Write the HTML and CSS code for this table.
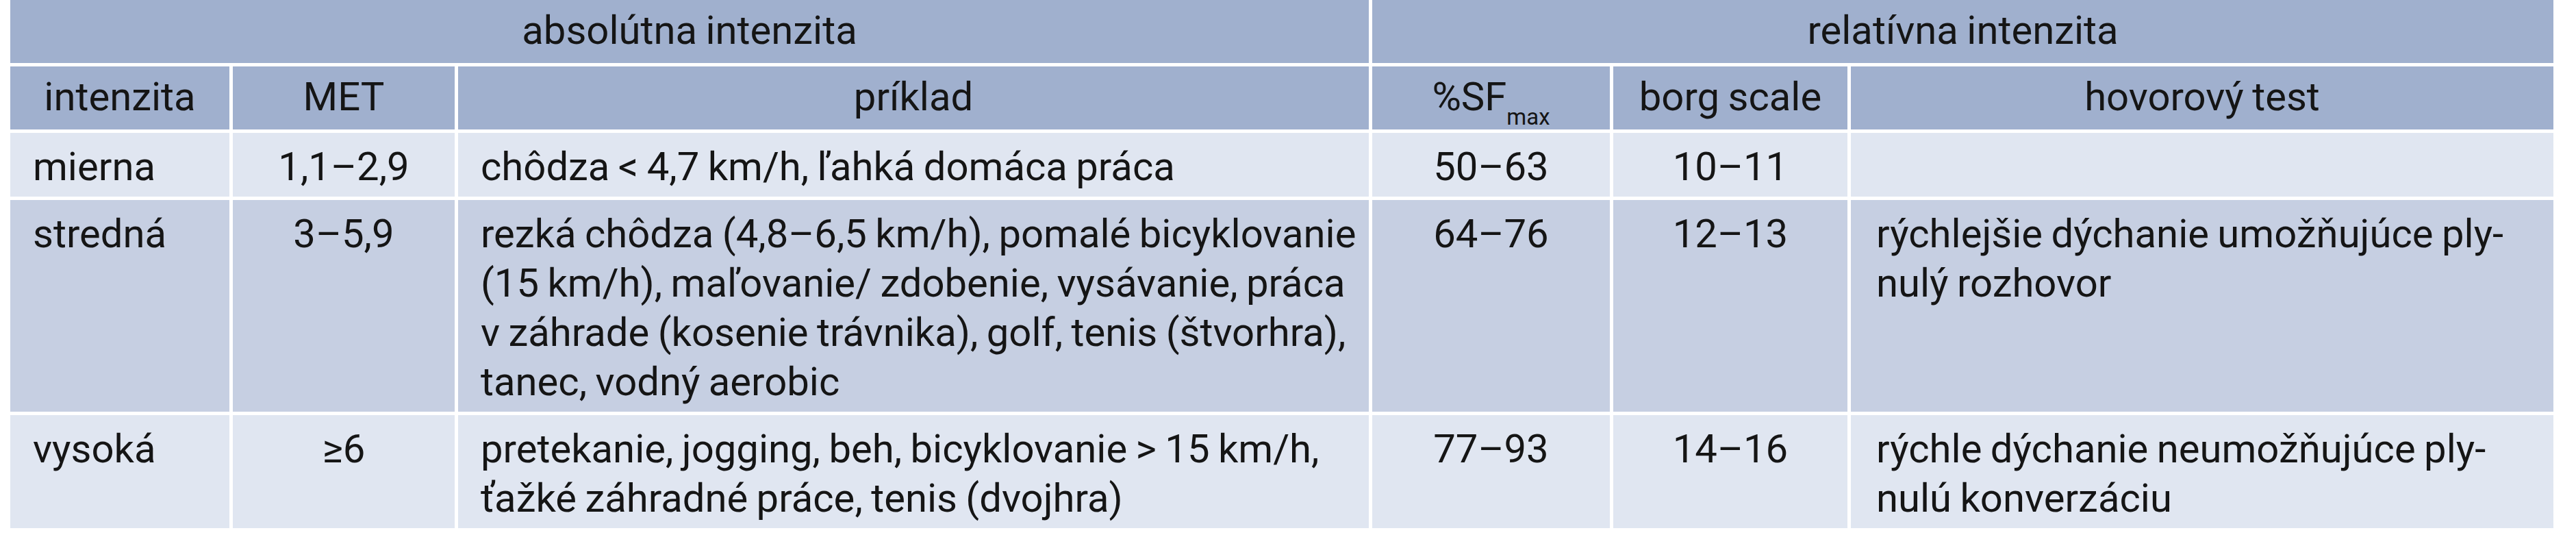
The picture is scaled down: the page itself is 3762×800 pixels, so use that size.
FILE: index.html
```html
<!DOCTYPE html>
<html lang="sk">
<head>
<meta charset="utf-8">
<title>Intenzita pohybovej aktivity</title>
<link rel="stylesheet" href="styles.css">
</head>
<body>
<table class="tab">
  <colgroup>
    <col class="c-int">
    <col class="c-met">
    <col class="c-pri">
    <col class="c-sf">
    <col class="c-borg">
    <col class="c-test">
  </colgroup>
  <thead>
    <tr class="hd">
      <th colspan="3">absolútna intenzita</th>
      <th colspan="3">relatívna intenzita</th>
    </tr>
    <tr class="hd">
      <th>intenzita</th>
      <th>MET</th>
      <th>príklad</th>
      <th>%SF<span class="sub">max</span></th>
      <th>borg scale</th>
      <th>hovorový test</th>
    </tr>
  </thead>
  <tbody>
    <tr class="light">
      <td>mierna</td>
      <td class="num">1,1–2,9</td>
      <td>chôdza &lt; 4,7 km/h, ľahká domáca práca</td>
      <td class="num">50–63</td>
      <td class="num">10–11</td>
      <td class="test"></td>
    </tr>
    <tr class="mid">
      <td>stredná</td>
      <td class="num">3–5,9</td>
      <td>rezká chôdza (4,8–6,5 km/h), pomalé bicyklovanie<br>(15 km/h), maľovanie/ zdobenie, vysávanie, práca<br>v záhrade (kosenie trávnika), golf, tenis (štvorhra),<br>tanec, vodný aerobic</td>
      <td class="num">64–76</td>
      <td class="num">12–13</td>
      <td class="test">rýchlejšie dýchanie umožňujúce ply-<br>nulý rozhovor</td>
    </tr>
    <tr class="light">
      <td>vysoká</td>
      <td class="num">≥6</td>
      <td>pretekanie, jogging, beh, bicyklovanie &gt; 15 km/h,<br>ťažké záhradné práce, tenis (dvojhra)</td>
      <td class="num">77–93</td>
      <td class="num">14–16</td>
      <td class="test">rýchle dýchanie neumožňujúce ply-<br>nulú konverzáciu</td>
    </tr>
  </tbody>
</table>
</body>
</html>
```

FILE: styles.css
```css
html, body {
  margin: 0;
  padding: 0;
  background: #ffffff;
}

.tab {
  width: 3724px;
  table-layout: fixed;
  border-collapse: separate;
  border-spacing: 5px;
  margin: -5px 0 0 10px;
  font-family: Roboto, "Liberation Sans", sans-serif;
  font-size: 58px;
  line-height: 72px;
  word-spacing: -2px;
  color: #151515;
}

.c-int { width: 320px; }
.c-met { width: 324px; }
.c-pri { width: 1330px; }
.c-sf { width: 347px; }
.c-borg { width: 342px; }
.c-test { width: 1026px; }

.hd th {
  background: #a0b0ce;
  font-weight: normal;
  text-align: center;
  vertical-align: top;
  padding: 8px 10px 12px;
  white-space: nowrap;
}

td {
  vertical-align: top;
  text-align: left;
  padding: 13px 33px 8px;
  white-space: nowrap;
}

td.num {
  text-align: center;
  padding-left: 10px;
  padding-right: 10px;
}

td.test {
  padding-left: 37px;
}

.light td { background: #e0e6f1; }
.mid td { background: #c6cfe2; }

.sub {
  font-size: 33px;
  line-height: 0;
  vertical-align: -21px;
}
```
